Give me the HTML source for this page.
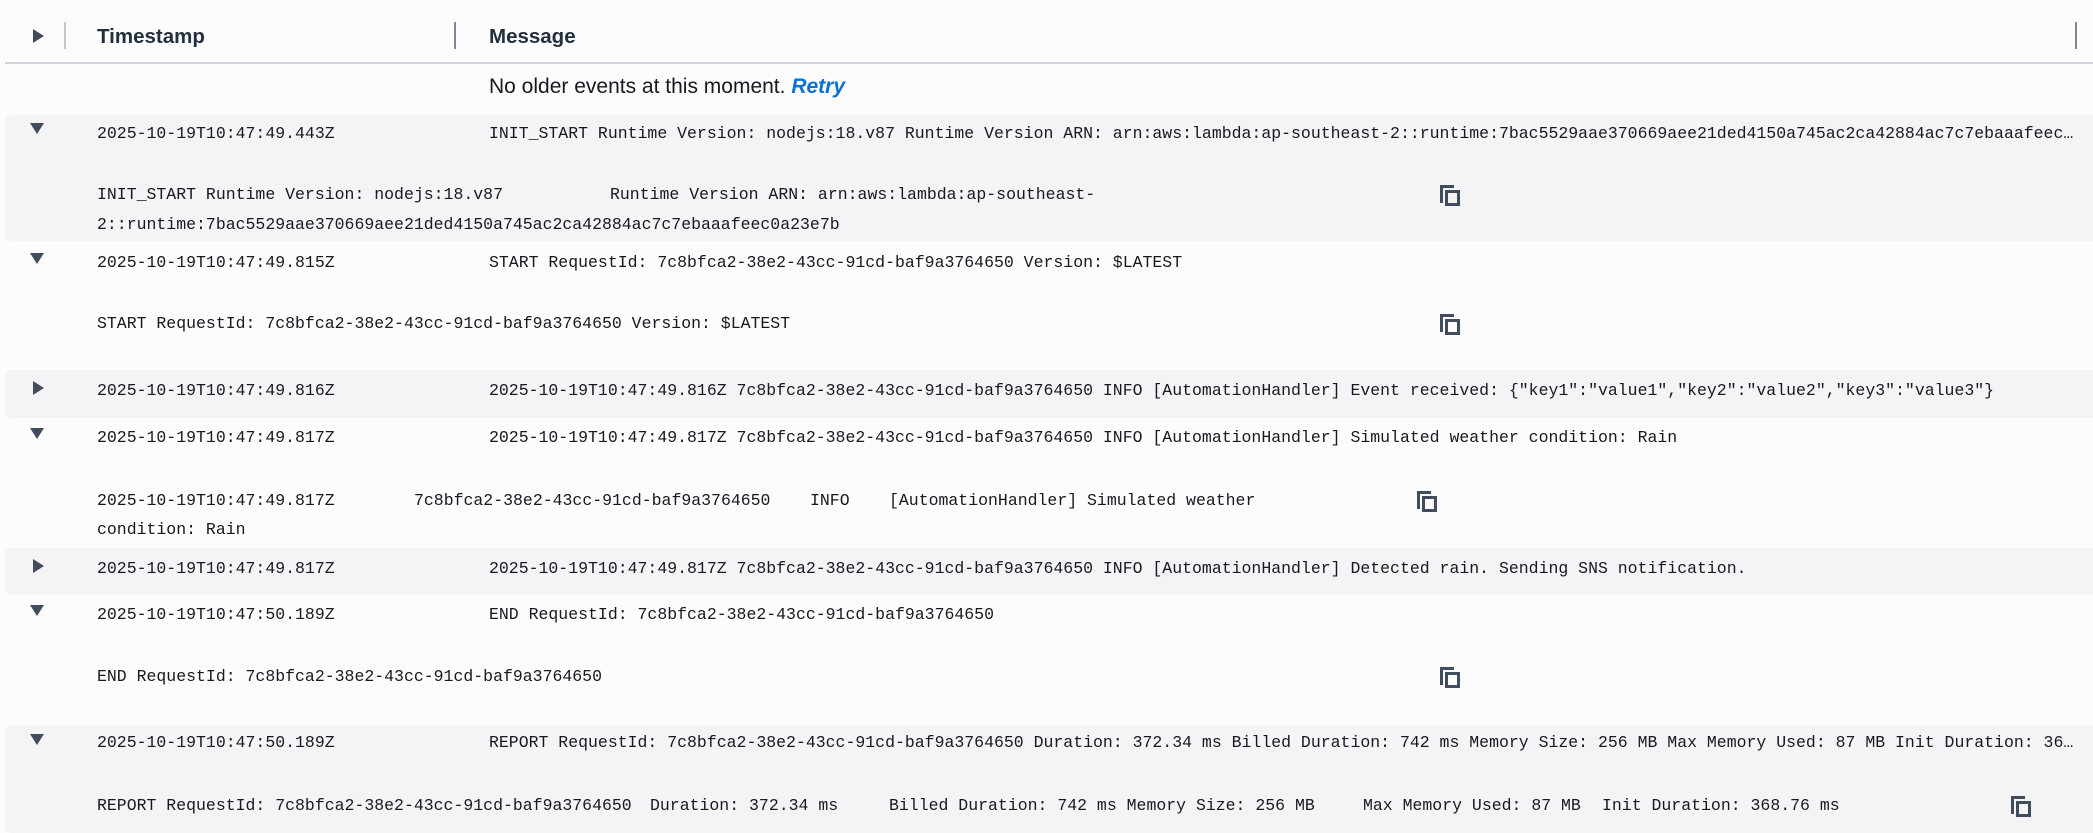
<!DOCTYPE html>
<html><head><meta charset="utf-8"><style>
*{margin:0;padding:0;box-sizing:border-box}
body{width:2093px;height:833px;background:#fcfcfd;position:relative;overflow:hidden;font-family:"Liberation Sans",sans-serif;color:#16191f}
.a{position:absolute;white-space:pre}
.m{font-family:"Liberation Mono",monospace;font-size:16.5px;line-height:20px;margin-top:-10px}
.bg{position:absolute;left:5px;right:0;background:#f4f4f7;border-radius:6px 0 0 6px}
.h{font-weight:bold;font-size:20.5px;margin-top:-11px;color:#232f3e}
.tri{position:absolute;width:0;height:0}
.down{border-left:7px solid transparent;border-right:7px solid transparent;border-top:11px solid #414d5c;left:30px}
.right{border-top:7px solid transparent;border-bottom:7px solid transparent;border-left:11px solid #414d5c;left:33px}
.cp{position:absolute;width:24px;height:24px}
</style></head><body>
<div class="tri right" style="top:29px"></div>
<div class="a" style="left:64px;top:22px;width:2px;height:27px;background:#c6c6cd"></div>
<div class="a h" style="left:97px;top:36px">Timestamp</div>
<div class="a" style="left:454px;top:22px;width:2px;height:27px;background:#7d8998"></div>
<div class="a h" style="left:489px;top:36px">Message</div>
<div class="a" style="left:2075px;top:22px;width:2px;height:27px;background:#7d8998"></div>
<div class="a" style="left:5px;right:0;top:62px;height:2px;background:#d1d5db"></div>
<div class="a" style="left:489px;top:75px;font-size:21px">No older events at this moment. <b style="color:#0972d3;font-style:italic">Retry</b></div>

<div class="bg" style="top:115px;height:126px"></div>
<div class="bg" style="top:370px;height:48px"></div>
<div class="bg" style="top:548px;height:47px"></div>
<div class="bg" style="top:725px;height:108px"></div>

<div class="tri down" style="top:123px"></div>
<div class="a m" style="left:97px;top:134px">2025-10-19T10:47:49.443Z</div>
<div class="a m" style="left:489px;top:134px;width:1585px;overflow:hidden;text-overflow:ellipsis">INIT_START Runtime Version: nodejs:18.v87 Runtime Version ARN: arn:aws:lambda:ap-southeast-2::runtime:7bac5529aae370669aee21ded4150a745ac2ca42884ac7c7ebaaafeec0a23e7b</div>
<div class="a m" style="left:97px;top:195px">INIT_START Runtime Version: nodejs:18.v87</div>
<div class="a m" style="left:610px;top:195px">Runtime Version ARN: arn:aws:lambda:ap-southeast-</div>
<div class="a m" style="left:97px;top:225px">2::runtime:7bac5529aae370669aee21ded4150a745ac2ca42884ac7c7ebaaafeec0a23e7b</div>
<div class="tri down" style="top:253px"></div>
<div class="a m" style="left:97px;top:263px">2025-10-19T10:47:49.815Z</div>
<div class="a m" style="left:489px;top:263px">START RequestId: 7c8bfca2-38e2-43cc-91cd-baf9a3764650 Version: $LATEST</div>
<div class="a m" style="left:97px;top:324px">START RequestId: 7c8bfca2-38e2-43cc-91cd-baf9a3764650 Version: $LATEST</div>
<div class="tri right" style="top:381px"></div>
<div class="a m" style="left:97px;top:391px">2025-10-19T10:47:49.816Z</div>
<div class="a m" style="left:489px;top:391px">2025-10-19T10:47:49.816Z 7c8bfca2-38e2-43cc-91cd-baf9a3764650 INFO [AutomationHandler] Event received: {"key1":"value1","key2":"value2","key3":"value3"}</div>
<div class="tri down" style="top:428px"></div>
<div class="a m" style="left:97px;top:438px">2025-10-19T10:47:49.817Z</div>
<div class="a m" style="left:489px;top:438px">2025-10-19T10:47:49.817Z 7c8bfca2-38e2-43cc-91cd-baf9a3764650 INFO [AutomationHandler] Simulated weather condition: Rain</div>
<div class="a m" style="left:97px;top:501px">2025-10-19T10:47:49.817Z</div>
<div class="a m" style="left:414px;top:501px">7c8bfca2-38e2-43cc-91cd-baf9a3764650</div>
<div class="a m" style="left:810px;top:501px">INFO</div>
<div class="a m" style="left:889px;top:501px">[AutomationHandler] Simulated weather</div>
<div class="a m" style="left:97px;top:530px">condition: Rain</div>
<div class="tri right" style="top:559px"></div>
<div class="a m" style="left:97px;top:569px">2025-10-19T10:47:49.817Z</div>
<div class="a m" style="left:489px;top:569px">2025-10-19T10:47:49.817Z 7c8bfca2-38e2-43cc-91cd-baf9a3764650 INFO [AutomationHandler] Detected rain. Sending SNS notification.</div>
<div class="tri down" style="top:605px"></div>
<div class="a m" style="left:97px;top:615px">2025-10-19T10:47:50.189Z</div>
<div class="a m" style="left:489px;top:615px">END RequestId: 7c8bfca2-38e2-43cc-91cd-baf9a3764650</div>
<div class="a m" style="left:97px;top:677px">END RequestId: 7c8bfca2-38e2-43cc-91cd-baf9a3764650</div>
<div class="tri down" style="top:734px"></div>
<div class="a m" style="left:97px;top:743px">2025-10-19T10:47:50.189Z</div>
<div class="a m" style="left:489px;top:743px;width:1585px;overflow:hidden;text-overflow:ellipsis">REPORT RequestId: 7c8bfca2-38e2-43cc-91cd-baf9a3764650 Duration: 372.34 ms Billed Duration: 742 ms Memory Size: 256 MB Max Memory Used: 87 MB Init Duration: 368.76 ms</div>
<div class="a m" style="left:97px;top:806px">REPORT RequestId: 7c8bfca2-38e2-43cc-91cd-baf9a3764650</div>
<div class="a m" style="left:650px;top:806px">Duration: 372.34 ms</div>
<div class="a m" style="left:889px;top:806px">Billed Duration: 742 ms Memory Size: 256 MB</div>
<div class="a m" style="left:1363px;top:806px">Max Memory Used: 87 MB</div>
<div class="a m" style="left:1602px;top:806px">Init Duration: 368.76 ms</div>

<svg class="cp" style="left:1438px;top:183px" viewBox="0 0 24 24"><path d="M2 2h14v3H5v15H2z" fill="#414d5c"/><rect x="8.5" y="8.5" width="12" height="13" fill="none" stroke="#414d5c" stroke-width="3"/></svg>
<svg class="cp" style="left:1438px;top:312px" viewBox="0 0 24 24"><path d="M2 2h14v3H5v15H2z" fill="#414d5c"/><rect x="8.5" y="8.5" width="12" height="13" fill="none" stroke="#414d5c" stroke-width="3"/></svg>
<svg class="cp" style="left:1415px;top:489px" viewBox="0 0 24 24"><path d="M2 2h14v3H5v15H2z" fill="#414d5c"/><rect x="8.5" y="8.5" width="12" height="13" fill="none" stroke="#414d5c" stroke-width="3"/></svg>
<svg class="cp" style="left:1438px;top:665px" viewBox="0 0 24 24"><path d="M2 2h14v3H5v15H2z" fill="#414d5c"/><rect x="8.5" y="8.5" width="12" height="13" fill="none" stroke="#414d5c" stroke-width="3"/></svg>
<svg class="cp" style="left:2009px;top:794px" viewBox="0 0 24 24"><path d="M2 2h14v3H5v15H2z" fill="#414d5c"/><rect x="8.5" y="8.5" width="12" height="13" fill="none" stroke="#414d5c" stroke-width="3"/></svg>
</body></html>
